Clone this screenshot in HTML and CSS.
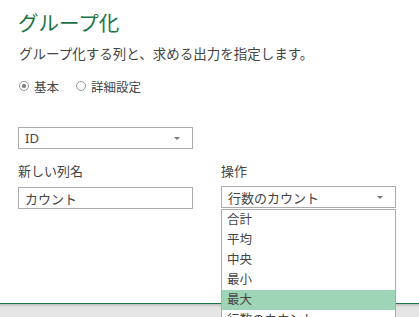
FILE: index.html
```html
<!DOCTYPE html>
<html lang="ja">
<head>
  <meta charset="UTF-8">
  <meta name="viewport" content="width=device-width, initial-scale=1.0">
  <title>グループ化</title>
  <link rel="stylesheet" href="styles.css">
</head>
<body>
  <div class="dialog">
    <h1 class="title">グループ化</h1>
    <p class="subtitle">グループ化する列と、求める出力を指定します。</p>

    <div class="radios">
      <label class="radio"><span class="dot checked"></span>基本</label>
      <label class="radio"><span class="dot"></span>詳細設定</label>
    </div>

    <div class="select key">
      <span>ID</span>
      <span class="arrow"></span>
    </div>

    <div class="fields">
      <div class="field">
        <div class="label">新しい列名</div>
        <div class="textbox">カウント</div>
      </div>
      <div class="field">
        <div class="label">操作</div>
        <div class="select-wrap">
          <div class="select">
            <span>行数のカウント</span>
            <span class="arrow"></span>
          </div>
          <ul class="listbox">
            <li>合計</li>
            <li>平均</li>
            <li>中央</li>
            <li>最小</li>
            <li class="selected">最大</li>
            <li>行数のカウント</li>
          </ul>
        </div>
      </div>
    </div>
  </div>
  <div class="footer"></div>
</body>
</html>
```

FILE: styles.css
```css
html, body {
  margin: 0;
  padding: 0;
}
body {
  width: 419px;
  height: 317px;
  overflow: hidden;
  background: #fff;
  font-family: "Noto Sans", "Noto Sans CJK JP", sans-serif;
  color: #444;
}
.dialog {
  height: 303px;
  padding: 0 18px;
  box-sizing: border-box;
}
.title {
  margin: 0;
  padding-top: 10px;
  font-size: 20.5px;
  line-height: 26px;
  font-weight: normal;
  color: #217346;
}
.subtitle {
  margin: 8px 0 0 1px;
  font-size: 13.5px;
  line-height: 20px;
}
.radios {
  display: flex;
  gap: 16px;
  margin-top: 12px;
  height: 20px;
  align-items: center;
  font-size: 12.5px;
}
.radio {
  display: flex;
  align-items: center;
  gap: 5px;
}
.dot {
  width: 8px;
  height: 8px;
  border: 1px solid #999;
  border-radius: 50%;
  display: flex;
  align-items: center;
  justify-content: center;
  margin-left: 1px;
}
.dot.checked::after {
  content: "";
  width: 4px;
  height: 4px;
  border-radius: 50%;
  background: #777;
}
.select, .textbox {
  width: 175px;
  height: 22px;
  box-sizing: border-box;
  border: 1px solid #ababab;
  background: #fff;
  display: flex;
  align-items: center;
  padding: 0 6px;
  font-size: 13px;
}
.select {
  justify-content: space-between;
}
.select.key {
  margin-top: 31px;
}
.arrow {
  width: 0;
  height: 0;
  border-left: 3px solid transparent;
  border-right: 3px solid transparent;
  border-top: 3px solid #777;
  margin-right: 6px;
}
.fields {
  display: flex;
  gap: 28px;
  margin-top: 12px;
}
.label {
  font-size: 13px;
  line-height: 20px;
  margin-bottom: 5px;
}
.field:first-child .label {
  margin-bottom: 6px;
}
.select-wrap {
  position: relative;
}
.listbox {
  position: absolute;
  top: 23px;
  left: 0;
  width: 175px;
  height: 108px;
  overflow: hidden;
  box-sizing: border-box;
  margin: 0;
  padding: 0;
  list-style: none;
  border: 1px solid #ababab;
  border-bottom: none;
  background: #fff;
  z-index: 2;
}
.listbox li {
  height: 20px;
  line-height: 20px;
  padding-left: 5px;
  font-size: 12.5px;
}
.listbox li.selected {
  background: #9fd5b7;
}
.footer {
  height: 14px;
  border-top: 1px solid #217346;
  background: linear-gradient(#bdbdbd, #e4e4e4 3px, #e6e6e6);
}
```
